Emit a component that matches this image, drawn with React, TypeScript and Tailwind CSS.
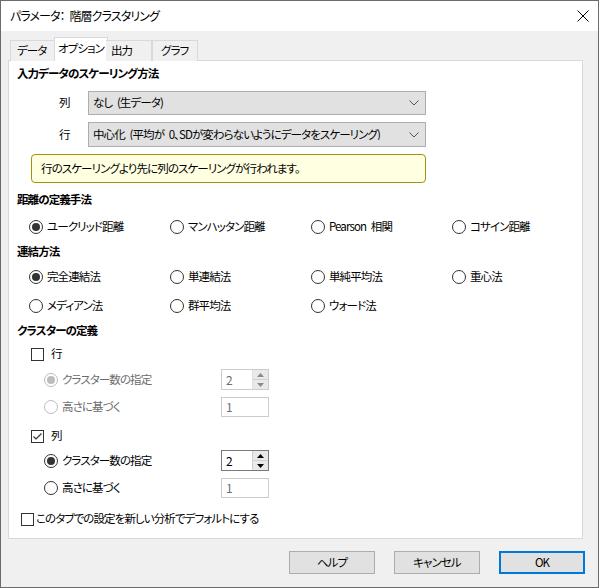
import React from "react";

const FONT =
  "font-['Noto_Sans_CJK_JP','Noto_Sans',sans-serif] [font-feature-settings:'palt'] text-[11.5px] tracking-[-0.9px] [word-spacing:3px] text-black";

function Radio({ checked, disabled, label }: { checked?: boolean; disabled?: boolean; label: string }) {
  return (
    <div className="flex items-center gap-[4px]">
      <span
        className={`flex h-[14px] w-[14px] shrink-0 items-center justify-center rounded-full border bg-white ${
          disabled ? "border-[#bcbcbc]" : "border-[#333]"
        }`}
      >
        {checked ? (
          <span className={`h-[8px] w-[8px] rounded-full ${disabled ? "bg-[#bcbcbc]" : "bg-[#333]"}`} />
        ) : null}
      </span>
      <span className={`whitespace-nowrap leading-none ${disabled ? "text-[#6d6d6d]" : ""}`}>{label}</span>
    </div>
  );
}

function Check({ checked, label, gap = "gap-[7px]" }: { checked?: boolean; label: string; gap?: string }) {
  return (
    <div className={`flex items-center ${gap}`}>
      <span className="flex h-[13px] w-[13px] shrink-0 items-center justify-center border border-[#333] bg-white">
        {checked ? (
          <svg width="11" height="11" viewBox="0 0 11 11">
            <polyline points="1.5,5.5 4,8 9.5,2.5" fill="none" stroke="#333" strokeWidth="1.2" />
          </svg>
        ) : null}
      </span>
      <span className="whitespace-nowrap leading-none">{label}</span>
    </div>
  );
}

function Select({ text }: { text: string }) {
  return (
    <div className="flex h-full w-[338px] items-center border border-[#adadad] bg-[#e1e1e1] pl-[4px] pr-[6px]">
      <span className="min-w-0 flex-1 overflow-hidden whitespace-nowrap leading-none">{text}</span>
      <svg width="10" height="6" viewBox="0 0 10 6" className="ml-[4px] shrink-0">
        <polyline points="0.5,0.5 5,5 9.5,0.5" fill="none" stroke="#555" strokeWidth="1" />
      </svg>
    </div>
  );
}

function Spin({ value, disabled }: { value: string; disabled?: boolean }) {
  return (
    <div
      className={`flex h-full w-[48px] border bg-white ${
        disabled ? "border-[#cccccc] text-[#6d6d6d]" : "border-[#7a7a7a]"
      }`}
    >
      <span className="flex flex-1 items-center pl-[4px] text-[12px] leading-none">{value}</span>
      <div className={`flex w-[16px] flex-col border-l ${disabled ? "border-[#e0e0e0]" : "border-[#cfcfcf]"}`}>
        <div className="flex flex-1 items-center justify-center border-b border-[#cfcfcf] bg-[#e9e9e9]">
          <svg width="7" height="4" viewBox="0 0 7 4">
            <polygon points="0,4 3.5,0 7,4" fill={disabled ? "#8a8a8a" : "#000"} />
          </svg>
        </div>
        <div className="flex flex-1 items-center justify-center bg-[#e9e9e9]">
          <svg width="7" height="4" viewBox="0 0 7 4">
            <polygon points="0,0 3.5,4 7,0" fill={disabled ? "#8a8a8a" : "#000"} />
          </svg>
        </div>
      </div>
    </div>
  );
}

function TextBox({ value, disabled }: { value: string; disabled?: boolean }) {
  return (
    <div
      className={`flex h-full w-[48px] items-center border bg-white pl-[4px] text-[12px] leading-none ${
        disabled ? "border-[#cccccc] text-[#6d6d6d]" : "border-[#7a7a7a]"
      }`}
    >
      {value}
    </div>
  );
}

function Heading({ children, className = "" }: { children: React.ReactNode; className?: string }) {
  return <div className={`flex items-center pl-[8px] font-bold ${className}`}>{children}</div>;
}

const COLS = "grid grid-cols-[141px_141px_141px_141px] items-center pl-[20px]";

export default function App() {
  const tabs = ["データ", "オプション", "出力", "グラフ"];
  return (
    <div className={`${FONT} flex h-[588px] w-[599px] flex-col border border-[#6b6b6b] bg-[#f0f0f0]`}>
      {/* title bar */}
      <div className="flex h-[30px] shrink-0 items-center justify-between bg-white pl-[9px] pr-[9px]">
        <span className="text-[12px] leading-none">パラメータ： 階層クラスタリング</span>
        <svg width="12" height="12" viewBox="0 0 12 12">
          <path d="M0.5 0.5 L11.5 11.5 M11.5 0.5 L0.5 11.5" stroke="#000" strokeWidth="1" />
        </svg>
      </div>

      {/* tabs */}
      <div className="relative z-10 mt-[6px] flex h-[24px] items-end pl-[9px]">
        {tabs.map((t, i) =>
          i === 1 ? (
            <div
              key={t}
              className="-mx-[2px] flex h-[24px] w-[54px] items-center justify-center whitespace-nowrap border border-b-0 border-[#d9d9d9] bg-white pb-[1px]"
            >
              {t}
            </div>
          ) : (
            <div
              key={t}
              className={`flex h-[21px] w-[46px] items-center whitespace-nowrap border border-b-0 border-[#d9d9d9] bg-[#f0f0f0] ${
                i === 0 ? "border-r-0 pl-[6px]" : ""
              } ${i === 2 ? "border-l-0 pl-[5px]" : ""} ${i === 3 ? "pl-[8px]" : ""}`}
            >
              {t}
            </div>
          )
        )}
      </div>

      {/* panel */}
      <div className="-mt-px ml-[7px] flex h-[479px] w-[575px] flex-col border border-[#d9d9d9] bg-white">
        <Heading className="h-[25px]">入力データのスケーリング方法</Heading>
        <div className="mt-[5px] flex h-[24px] items-center">
          <span className="w-[79px] pl-[50px]">列</span>
          <Select text="なし (生データ)" />
        </div>
        <div className="mt-[7px] flex h-[25px] items-center">
          <span className="w-[79px] pl-[50px]">行</span>
          <Select text="中心化 (平均が 0、SDが変わらないようにデータをスケーリング)" />
        </div>
        <div className="ml-[22px] mt-[7px] flex h-[29px] w-[395px] items-center rounded-[4px] border-[1.5px] border-[#a8900c] bg-[#ffffe1] pl-[9px]">
          行のスケーリングより先に列のスケーリングが行われます。
        </div>

        <Heading className="mt-[4px] h-[26px]">距離の定義手法</Heading>
        <div className={`${COLS} mt-px h-[26px]`}>
          <Radio checked label="ユークリッド距離" />
          <Radio label="マンハッタン距離" />
          <Radio label="Pearson 相関" />
          <Radio label="コサイン距離" />
        </div>

        <Heading className="h-[24px]">連結方法</Heading>
        <div className={`${COLS} h-[26px]`}>
          <Radio checked label="完全連結法" />
          <Radio label="単連結法" />
          <Radio label="単純平均法" />
          <Radio label="重心法" />
        </div>
        <div className={`${COLS} mt-[3px] h-[26px]`}>
          <Radio label="メディアン法" />
          <Radio label="群平均法" />
          <Radio label="ウォード法" />
        </div>

        <Heading className="h-[24px]">クラスターの定義</Heading>
        <div className="flex h-[22px] items-center pl-[22px]">
          <Check label="行" />
        </div>
        <div className="mt-[4px] flex h-[21px] items-center pl-[35px]">
          <div className="w-[177px]">
            <Radio checked disabled label="クラスター数の指定" />
          </div>
          <Spin value="2" disabled />
        </div>
        <div className="mt-[7px] flex h-[20px] items-center pl-[35px]">
          <div className="w-[177px]">
            <Radio disabled label="高さに基づく" />
          </div>
          <TextBox value="1" disabled />
        </div>
        <div className="mt-[8px] flex h-[22px] items-center pl-[22px]">
          <Check checked label="列" />
        </div>
        <div className="mt-[3px] flex h-[21px] items-center pl-[35px]">
          <div className="w-[177px]">
            <Radio checked label="クラスター数の指定" />
          </div>
          <Spin value="2" />
        </div>
        <div className="mt-[7px] flex h-[20px] items-center pl-[35px]">
          <div className="w-[177px]">
            <Radio label="高さに基づく" />
          </div>
          <TextBox value="1" disabled />
        </div>
        <div className="mt-[10px] flex h-[22px] items-center pl-[12px]">
          <Check gap="gap-[2px]" label="このタブでの設定を新しい分析でデフォルトにする" />
        </div>
      </div>

      {/* buttons */}
      <div className="mt-[12px] flex h-[23px] justify-end gap-[19px] pr-[13px]">
        <button className="h-[23px] w-[86px] border border-[#adadad] bg-[#e1e1e1]">ヘルプ</button>
        <button className="h-[23px] w-[86px] border border-[#adadad] bg-[#e1e1e1]">キャンセル</button>
        <button className="h-[23px] w-[86px] border-2 border-[#0078d7] bg-[#e1e1e1]">OK</button>
      </div>
    </div>
  );
}
